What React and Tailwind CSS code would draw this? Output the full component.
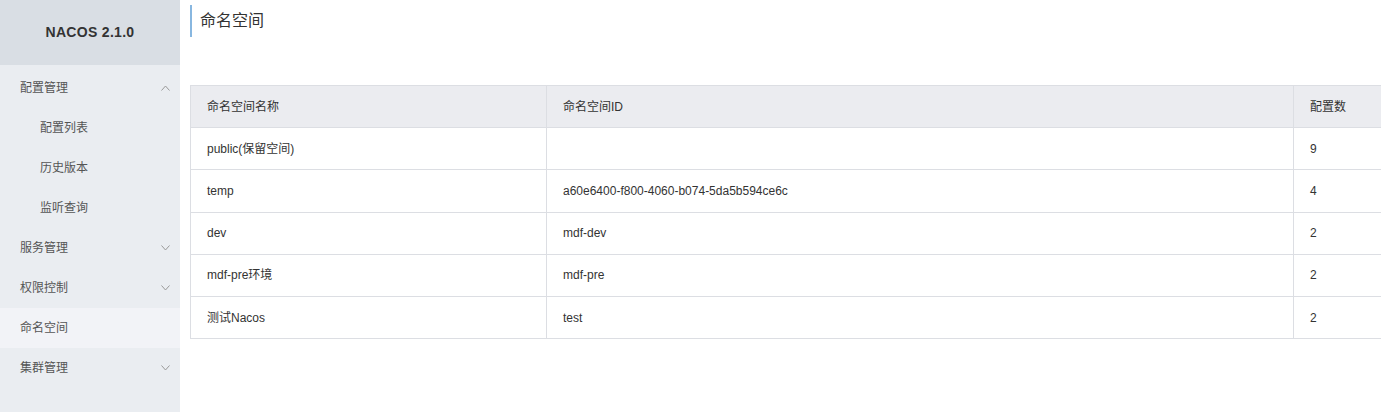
import React from 'react'

const font = { fontFamily: '"Liberation Sans", "Noto Sans CJK SC", sans-serif' }

function Chevron({ up }) {
  return (
    <svg width="9" height="6" viewBox="0 0 9 6" className="text-[#999]">
      <path
        d={up ? 'M0.5 5.5 L4.5 1 L8.5 5.5' : 'M0.5 0.5 L4.5 5 L8.5 0.5'}
        fill="none"
        stroke="currentColor"
        strokeWidth="1"
      />
    </svg>
  )
}

const menu = [
  { label: '配置管理', arrow: 'up' },
  { label: '配置列表', sub: true },
  { label: '历史版本', sub: true },
  { label: '监听查询', sub: true },
  { label: '服务管理', arrow: 'down' },
  { label: '权限控制', arrow: 'down' },
  { label: '命名空间', active: true },
  { label: '集群管理', arrow: 'down' },
]

const rows = [
  ['public(保留空间)', '', '9'],
  ['temp', 'a60e6400-f800-4060-b074-5da5b594ce6c', '4'],
  ['dev', 'mdf-dev', '2'],
  ['mdf-pre环境', 'mdf-pre', '2'],
  ['测试Nacos', 'test', '2'],
]

export default function App() {
  return (
    <div className="flex h-[412px] w-full overflow-hidden bg-white text-[#333]" style={font}>
      <aside className="flex w-[180px] shrink-0 flex-col bg-[#eaedf1]">
        <div className="flex h-[65px] items-center justify-center bg-[#d9dee4] text-[14px] font-bold tracking-[0.3px] text-[#333]">
          NACOS 2.1.0
        </div>
        <ul className="pt-[3px]">
          {menu.map((m) => (
            <li
              key={m.label}
              className={`flex h-[40px] items-center justify-between pr-[10px] text-[12px] text-[#555] ${
                m.sub ? 'pl-[40px]' : 'pl-[20px]'
              } ${m.active ? 'bg-[#f2f3f7] text-[#333]' : ''}`}
            >
              <span>{m.label}</span>
              {m.arrow && <Chevron up={m.arrow === 'up'} />}
            </li>
          ))}
        </ul>
      </aside>
      <main className="min-w-0 flex-1 overflow-hidden pl-[10px] pt-[5px]">
        <div className="flex h-[32px] items-center border-l-2 border-[#88b7e0] pl-[8px] text-[16px] text-[#333]">
          命名空间
        </div>
        <table className="mt-[48px] w-[1210px] table-fixed border-collapse text-[12px] text-[#333]">
          <colgroup>
            <col className="w-[356px]" />
            <col className="w-[747px]" />
            <col />
          </colgroup>
          <thead>
            <tr className="h-[42px] bg-[#ebecf0]">
              {['命名空间名称', '命名空间ID', '配置数'].map((h) => (
                <th key={h} className="border border-[#dcdee3] pl-[16px] text-left font-normal">
                  {h}
                </th>
              ))}
            </tr>
          </thead>
          <tbody>
            {rows.map((r) => (
              <tr key={r[0]} className="h-[42.25px]">
                {r.map((c, i) => (
                  <td key={i} className="border border-[#dcdee3] pl-[16px]">
                    {c}
                  </td>
                ))}
              </tr>
            ))}
          </tbody>
        </table>
      </main>
    </div>
  )
}
